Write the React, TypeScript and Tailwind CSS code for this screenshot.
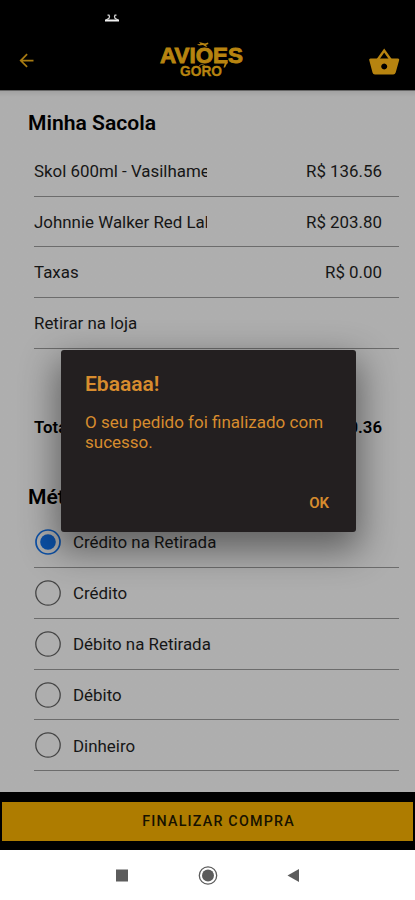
import { useState } from 'react';

interface BagItem {
  name: string;
  price?: string;
}

const items: BagItem[] = [
  { name: 'Skol 600ml - Vasilhame', price: 'R$ 136.56' },
  { name: 'Johnnie Walker Red Label', price: 'R$ 203.80' },
  { name: 'Taxas', price: 'R$ 0.00' },
  { name: 'Retirar na loja' },
];

const methods = ['Crédito na Retirada', 'Crédito', 'Débito na Retirada', 'Débito', 'Dinheiro'];

function Logo() {
  return (
    <svg width="90" height="40" viewBox="0 0 90 40" className="font-['Liberation_Sans',sans-serif] font-bold">
      <g fill="#b78410" stroke="#b78410">
        <text x="4" y="23" fontSize="22" strokeWidth="0.9" textLength="83" lengthAdjust="spacingAndGlyphs">
          AVIOES
        </text>
        <text x="24" y="36" fontSize="14" strokeWidth="0.3" textLength="42" lengthAdjust="spacingAndGlyphs">
          GORO
        </text>
      </g>
      <path d="M43 2l6 1.600 3-1.200.4 1.600-2.400 1 1.400 2-2-.4-2.400-1.600-4 .6-2-1.400 3.400-.2z" fill="#b78410" />
      <path d="M69 22.500l2.500 0-2.500 5-1.500 0z" fill="#b78410" />
      <path d="M43 26l3-2 3 2" fill="none" stroke="#8a6820" />
    </svg>
  );
}

function Header() {
  return (
    <header className="h-[90px] shrink-0 bg-black">
      <div className="h-[31px] pl-[105px] pt-[14px]">
        <svg width="14" height="9" viewBox="0 0 14 9">
          <path d="M0 6.500h14" fill="none" stroke="#f2f2f2" strokeWidth="2" />
          <path d="M2.500 1.200h1.500q1 1.300 0 3L1 6M11.500 1.200H10q-1 1.300 0 3l3 1.800" fill="none" stroke="#d8d8d8" strokeWidth="1.300" />
        </svg>
      </div>
      <div className="flex h-[59px] items-center justify-between pl-[15px] pr-[13px]">
        <button className="flex h-[22px] w-[22px] items-center justify-center">
          <svg width="21" height="21" viewBox="0 0 24 24" fill="#a87b12">
            <path d="M20 11H7.800l5.600-5.600L12 4l-8 8 8 8 1.400-1.400L7.800 13H20z" />
          </svg>
        </button>
        <div className="mb-[2px] mr-[1px]">
          <Logo />
        </div>
        <button className="mt-[3px]">
          <svg width="36" height="32" viewBox="0 0 36 32">
            <path d="M11.500 14L18.200 4.500l6.700 9.500" fill="none" stroke="#b78410" strokeWidth="2.400" />
            <path
              fillRule="evenodd"
              fill="#b78410"
              d="M4.500 12.500h27.500q1.500 0 1.200 1.500l-3.500 12.500q-.6 2-2.500 2H9q-2 0-2.500-2L3.200 14q-.3-1.500 1.300-1.500zM18.200 17.500a3 3 0 1 0 .01 0z"
            />
          </svg>
        </button>
      </div>
    </header>
  );
}

function Radio({ checked }: { checked: boolean }) {
  return (
    <svg width="28" height="28" viewBox="0 0 28 28" className="shrink-0">
      {checked ? (
        <>
          <circle cx="14" cy="14" r="12" fill="none" stroke="#0c50a6" strokeWidth="1.700" />
          <circle cx="14" cy="14" r="7.800" fill="#0c50a6" />
        </>
      ) : (
        <circle cx="14" cy="14" r="12.200" fill="none" stroke="#454545" strokeWidth="1.300" />
      )}
    </svg>
  );
}

function SuccessDialog() {
  return (
    <div className="absolute left-[61px] top-[350px] flex h-[182px] w-[295px] flex-col rounded-[3px] bg-[#231f20] pl-[24px] pr-[27px] text-[#d78c2e] shadow-[0_14px_36px_4px_rgba(0,0,0,0.45)]">
      <h2 className="mt-[21px] text-[21px] font-semibold leading-[26px]">Ebaaaa!</h2>
      <p className="mt-[15px] whitespace-nowrap text-[17px] leading-[20px]">
        O seu pedido foi finalizado com
        <br />
        sucesso.
      </p>
      <button className="mt-[41px] self-end text-[15px] font-semibold leading-[20px]">OK</button>
    </div>
  );
}

export default function App() {
  const [method, setMethod] = useState(methods[0]);

  return (
    <div className="relative flex h-[900px] w-[415px] flex-col overflow-hidden bg-[#aeaeae] font-[Roboto,sans-serif] text-[#161616]">
      <Header />

      <main className="flex-1 border-t border-[#666] bg-linear-to-b from-[#a2a2a2] to-[#aeaeae] to-[6px] pl-[28px] pr-[16px]">
        <h1 className="mt-[19px] text-[21.100px] font-semibold leading-[26px] text-black">Minha Sacola</h1>
        <div className="mt-[10px] pl-[6px]">
          {items.map((item) => (
            <div key={item.name} className="flex h-[50.700px] items-center justify-between border-b border-[#6c6c6c] pr-[17px] pt-[1.500px] text-[16.900px]">
              <span className="w-[173px] overflow-hidden whitespace-nowrap">{item.name}</span>
              <span>{item.price}</span>
            </div>
          ))}
        </div>
        <div className="mt-[66px] flex items-center justify-between pl-[6px] pr-[17px] text-[16.800px] font-semibold leading-[24px] text-black">
          <span>Total</span>
          <span>R$ 340.36</span>
        </div>

        <h1 className="mt-[45px] text-[21.100px] font-semibold leading-[26px] text-black">Método de Pagamento</h1>
        <div className="mt-[7.500px] pl-[6px]">
          {methods.map((m) => (
            <button
              key={m}
              onClick={() => setMethod(m)}
              className="flex h-[50.800px] w-full items-center gap-[11px] border-b border-[#6c6c6c] text-[16.900px]"
            >
              <Radio checked={m === method} />
              <span className="pt-[2px]">{m}</span>
            </button>
          ))}
        </div>
      </main>

      <footer className="h-[58px] shrink-0 bg-black px-[2px] pt-[10px]">
        <button className="h-[39px] w-full bg-[#ae7c00] pl-[22px] text-[14.300px] font-medium tracking-[1.200px] text-[#171200]">
          FINALIZAR COMPRA
        </button>
      </footer>

      <nav className="flex h-[50px] shrink-0 items-center justify-center bg-white">
        <svg width="200" height="24" viewBox="0 0 200 24" fill="#5c5c5c">
          <rect x="8" y="6.500" width="12" height="12" />
          <circle cx="100" cy="12.500" r="6" />
          <circle cx="100" cy="12.500" r="8.700" fill="none" stroke="#5c5c5c" strokeWidth="1.300" />
          <path d="M179.500 12.500l11.500-6.500v13z" />
        </svg>
      </nav>

      <SuccessDialog />
    </div>
  );
}
